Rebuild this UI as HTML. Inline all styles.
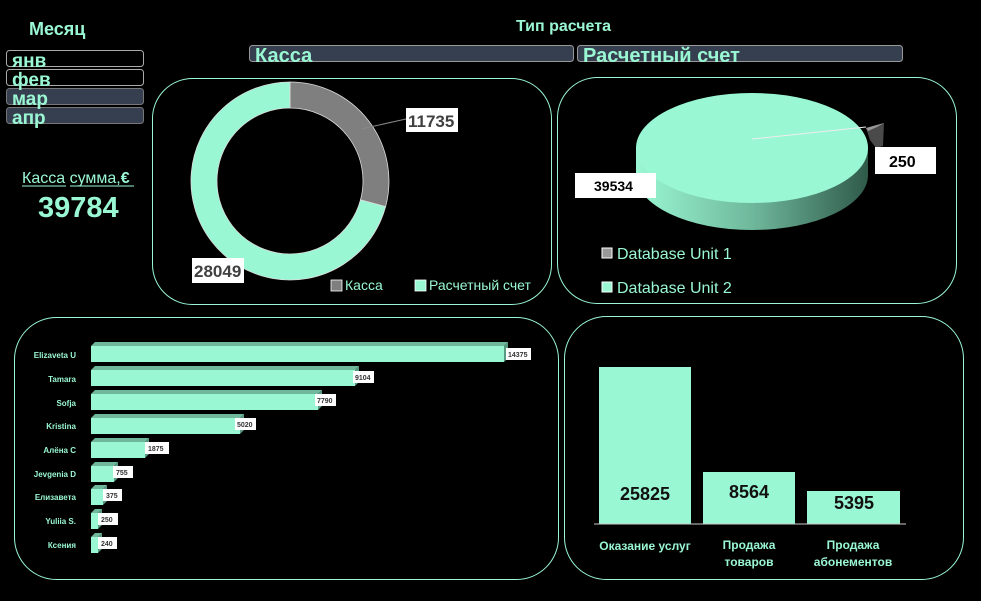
<!DOCTYPE html>
<html><head><meta charset="utf-8"><style>
body{margin:0;background:#000;width:981px;height:601px;overflow:hidden;font-family:"Liberation Sans",sans-serif;}
svg{position:absolute;left:0;top:0}
</style></head><body>
<svg width="981" height="601" viewBox="0 0 981 601" xmlns="http://www.w3.org/2000/svg">
<defs>
<linearGradient id="side" x1="0" x2="1" y1="0" y2="0">
<stop offset="0" stop-color="#9af7d3"/><stop offset="0.5" stop-color="#6fb89c"/><stop offset="1" stop-color="#2f5a4a"/>
</linearGradient>
</defs>
<g font-family="Liberation Sans, sans-serif">
<!-- left slicer -->
<text x="29" y="35" font-size="18" font-weight="bold" fill="#9af7d3">Месяц</text>
<rect x="6.5" y="50.5" width="137" height="16" rx="3" fill="#000" stroke="#aaa"/>
<rect x="6.5" y="69.5" width="137" height="16" rx="3" fill="#000" stroke="#aaa"/>
<rect x="6.5" y="88.5" width="137" height="16" rx="3" fill="#353f4f" stroke="#777"/>
<rect x="6.5" y="107.5" width="137" height="16" rx="3" fill="#353f4f" stroke="#777"/>
<g font-size="19" font-weight="bold" fill="#9af7d3">
<text x="12" y="67">янв</text>
<text x="12" y="86">фев</text>
<text x="12" y="105">мар</text>
<text x="12" y="124">апр</text>
</g>
<text x="22" y="183" font-size="16" fill="#9af7d3">Касса сумма,<tspan font-weight="bold">€</tspan></text>
<line x1="22" y1="186" x2="66" y2="186" stroke="#9af7d3"/><line x1="70" y1="186" x2="134" y2="186" stroke="#9af7d3"/>
<text x="38" y="217" font-size="29" font-weight="bold" fill="#9af7d3">39784</text>

<!-- top slicer -->
<text x="516" y="31" font-size="16" font-weight="bold" fill="#9af7d3">Тип расчета</text>
<rect x="249.5" y="45.5" width="324" height="16" rx="3" fill="#353f4f" stroke="#999"/>
<rect x="577.5" y="45.5" width="325" height="16" rx="3" fill="#353f4f" stroke="#999"/>
<text x="255" y="62" font-size="20" font-weight="bold" fill="#9af7d3">Касса</text>
<text x="583" y="62" font-size="20" font-weight="bold" fill="#9af7d3">Расчетный счет</text>

<!-- panels -->
<g fill="none" stroke="#9af7d3" stroke-width="1">
<rect x="152.5" y="78.5" width="399" height="226" rx="40"/>
<rect x="557.5" y="77.5" width="399" height="226" rx="40"/>
<rect x="14.5" y="317.5" width="544" height="262" rx="42"/>
<rect x="564.5" y="316.5" width="399" height="263" rx="42"/>
</g>

<!-- donut -->
<path d="M290 82 A99 99 0 0 1 385.6 206.6 L360.5 199.9 A73 73 0 0 0 290 108 Z" fill="#7f7f7f" stroke="#ddd" stroke-width="0.8"/>
<path d="M385.6 206.6 A99 99 0 1 1 290 82 L290 108 A73 73 0 1 0 360.5 199.9 Z" fill="#9af7d3" stroke="#ddd" stroke-width="0.8"/>
<line x1="361" y1="129" x2="406" y2="119" stroke="#888"/>
<rect x="406" y="108" width="52" height="24" fill="#fff"/>
<text x="408" y="127" font-size="17" font-weight="bold" fill="#404040">11735</text>
<rect x="192" y="258" width="52" height="25" fill="#fff"/>
<text x="194" y="277" font-size="17" font-weight="bold" fill="#404040">28049</text>
<rect x="331" y="280" width="11" height="11" fill="#7f7f7f" stroke="#fff" stroke-width="0.8"/>
<text x="345" y="290" font-size="14" fill="#9af7d3">Касса</text>
<rect x="415" y="280" width="11" height="11" fill="#9af7d3" stroke="#fff" stroke-width="0.8"/>
<text x="429" y="290" font-size="14" fill="#9af7d3">Расчетный счет</text>

<!-- 3d pie -->
<path d="M636 148 L636 175 A116 55 0 0 0 868 175 L868 148 Z" fill="url(#side)"/>
<path d="M866 128 L884 123 L883 146 L876 148 L870 140 Z" fill="#4a4a4a"/>
<path d="M866 128 L884 123 L877 127 L868 131 Z" fill="#999"/>
<ellipse cx="752" cy="148" rx="116" ry="55" fill="#9af7d3"/>
<line x1="752" y1="139" x2="866" y2="127" stroke="#eee" stroke-width="1"/>
<rect x="875" y="147" width="61" height="27" fill="#fff"/>
<text x="889" y="167" font-size="16" font-weight="bold" fill="#000">250</text>
<rect x="575" y="173" width="81" height="25" fill="#fff"/>
<text x="594" y="191" font-size="14" font-weight="bold" fill="#000">39534</text>
<rect x="602" y="248" width="10" height="10" fill="#999" stroke="#fff"/>
<text x="617" y="259" font-size="16" fill="#9af7d3">Database Unit 1</text>
<rect x="602" y="282" width="10" height="10" fill="#9af7d3" stroke="#fff"/>
<text x="617" y="293" font-size="16" fill="#9af7d3">Database Unit 2</text>

<!-- bars -->
<g font-size="8" font-weight="bold" text-anchor="end" fill="#9af7d3">
<text x="76" y="358">Elizaveta U</text>
<text x="76" y="382">Tamara</text>
<text x="76" y="406">Sofja</text>
<text x="76" y="429">Kristina</text>
<text x="76" y="453">Алёна С</text>
<text x="76" y="477">Jevgenia D</text>
<text x="76" y="500">Елизавета</text>
<text x="76" y="524">Yuliia S.</text>
<text x="76" y="548">Ксения</text>
</g>
<g fill="#9af7d3">
<polygon points="91,346 95,342 508,342 504,346" fill="#6fb89c"/><polygon points="504,346 508,342 508,358 504,362" fill="#5a9a82"/><rect x="91" y="346" width="413" height="16"/>
<polygon points="91,370 95,366 359,366 355,370" fill="#6fb89c"/><polygon points="355,370 359,366 359,382 355,386" fill="#5a9a82"/><rect x="91" y="370" width="264" height="16"/>
<polygon points="91,394 95,390 322,390 318,394" fill="#6fb89c"/><polygon points="318,394 322,390 322,406 318,410" fill="#5a9a82"/><rect x="91" y="394" width="227" height="16"/>
<polygon points="91,418 95,414 244,414 240,418" fill="#6fb89c"/><polygon points="240,418 244,414 244,430 240,434" fill="#5a9a82"/><rect x="91" y="418" width="149" height="16"/>
<polygon points="91,442 95,438 149,438 145,442" fill="#6fb89c"/><polygon points="145,442 149,438 149,454 145,458" fill="#5a9a82"/><rect x="91" y="442" width="54" height="16"/>
<polygon points="91,466 95,462 118,462 114,466" fill="#6fb89c"/><polygon points="114,466 118,462 118,478 114,482" fill="#5a9a82"/><rect x="91" y="466" width="23" height="16"/>
<polygon points="91,489 95,485 107,485 103,489" fill="#6fb89c"/><polygon points="103,489 107,485 107,501 103,505" fill="#5a9a82"/><rect x="91" y="489" width="12" height="16"/>
<polygon points="91,513 95,509 102,509 98,513" fill="#6fb89c"/><polygon points="98,513 102,509 102,525 98,529" fill="#5a9a82"/><rect x="91" y="513" width="7" height="16"/>
<polygon points="91,537 95,533 102,533 98,537" fill="#6fb89c"/><polygon points="98,537 102,533 102,549 98,553" fill="#5a9a82"/><rect x="91" y="537" width="7" height="16"/>
</g>
<g font-size="7" font-weight="bold" fill="#333">
<rect x="506" y="348" width="25" height="12" fill="#fff"/><text x="508" y="357">14375</text>
<rect x="353" y="371" width="21" height="12" fill="#fff"/><text x="355" y="380">9104</text>
<rect x="315" y="394" width="21" height="12" fill="#fff"/><text x="317" y="403">7790</text>
<rect x="235" y="418" width="21" height="12" fill="#fff"/><text x="237" y="427">5020</text>
<rect x="145" y="442" width="24" height="12" fill="#fff"/><text x="148" y="451">1875</text>
<rect x="113" y="466" width="20" height="12" fill="#fff"/><text x="116" y="475">755</text>
<rect x="103" y="489" width="19" height="12" fill="#fff"/><text x="106" y="498">375</text>
<rect x="98" y="513" width="20" height="12" fill="#fff"/><text x="101" y="522">250</text>
<rect x="98" y="537" width="19" height="12" fill="#fff"/><text x="101" y="546">240</text>
</g>

<!-- columns -->
<rect x="599" y="367" width="92" height="157" fill="#9af7d3"/>
<rect x="703" y="472" width="92" height="52" fill="#9af7d3"/>
<rect x="807" y="491" width="93" height="33" fill="#9af7d3"/>
<line x1="594" y1="524" x2="906" y2="524" stroke="#ccc"/>
<g font-size="18" font-weight="bold" fill="#111" text-anchor="middle">
<text x="645" y="500">25825</text>
<text x="749" y="498">8564</text>
<text x="854" y="509">5395</text>
</g>
<g font-size="12" font-weight="bold" fill="#9af7d3" text-anchor="middle">
<text x="645" y="550">Оказание услуг</text>
<text x="749" y="549">Продажа</text>
<text x="749" y="566">товаров</text>
<text x="853" y="549">Продажа</text>
<text x="853" y="566">абонементов</text>
</g>
</g>
</svg>
</body></html>
